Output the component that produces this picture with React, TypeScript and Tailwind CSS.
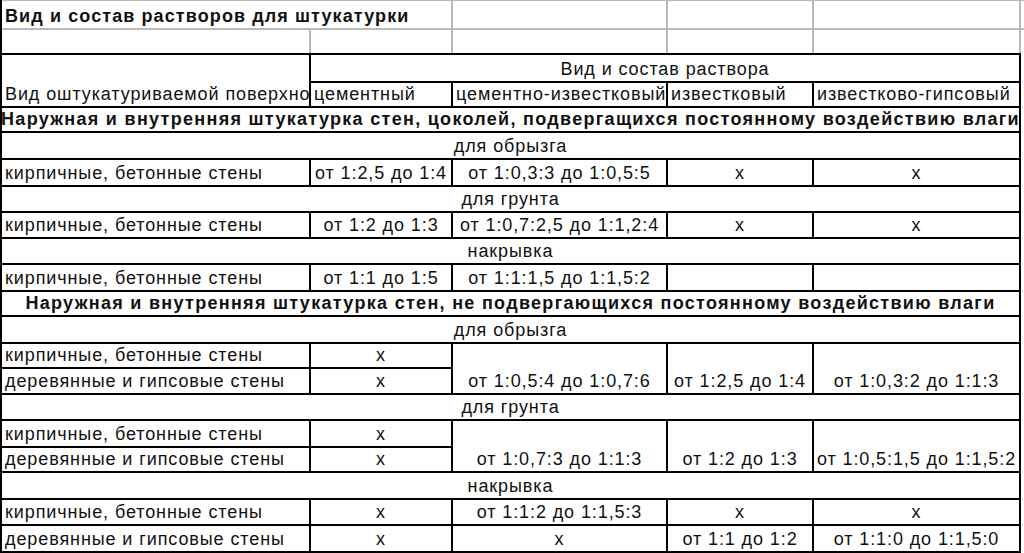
import type { ReactNode } from "react"

type CellProps = {
  children?: ReactNode
  className?: string
}

function Cell({ children, className = "" }: CellProps) {
  return (
    <div
      className={`flex items-end justify-center overflow-hidden whitespace-nowrap bg-white px-[3px] pb-[3px] leading-none ${className}`}
    >
      {children}
    </div>
  )
}

const walls = "кирпичные, бетонные стены"
const woodWalls = "деревянные и гипсовые стены"

export default function App() {
  return (
    <div className="h-[553px] w-[1024px] overflow-hidden bg-white font-['Liberation_Sans',Arial,sans-serif] text-[18px] tracking-[0.9px] text-[#111]">
      {/* empty sheet rows above the table */}
      <div className="grid h-[53px] grid-cols-[307px_140px_213px_144px_205px_1fr] grid-rows-[27px_23px] gap-[2px] border-l-2 border-black bg-[#b9b9b9] pt-px">
        <Cell className="col-span-2 justify-start font-bold tracking-[1.1px]">
          Вид и состав растворов для штукатурки
        </Cell>
        <Cell />
        <Cell />
        <Cell />
        <Cell />
        <Cell />
        <Cell />
        <Cell />
        <Cell />
        <Cell />
        <Cell />
      </div>

      <div className="flex">
        <div className="grid w-[1021px] shrink-0 grid-cols-[307px_140px_213px_144px_205px] grid-rows-[26px_23px_23px_25px_25px_24px_24px_24px_25px_23px_25px_23px_24px_24px_25px_23px_25px_24px_25px] gap-[2px] bg-black p-[2px]">
          <Cell className="row-span-2 justify-start">Вид оштукатуриваемой поверхно</Cell>
          <Cell className="col-span-4">Вид и состав раствора</Cell>
          <Cell className="justify-start">цементный</Cell>
          <Cell className="justify-start">цементно-известковый</Cell>
          <Cell className="justify-start">известковый</Cell>
          <Cell className="justify-start">известково-гипсовый</Cell>

          <Cell className="col-span-5 font-bold tracking-[1.3px]">
            Наружная и внутренняя штукатурка стен, цоколей, подвергащихся постоянному воздействию влаги
          </Cell>
          <Cell className="col-span-5">для обрызга</Cell>
          <Cell className="justify-start">{walls}</Cell>
          <Cell>от 1:2,5 до 1:4</Cell>
          <Cell>от 1:0,3:3 до 1:0,5:5</Cell>
          <Cell>x</Cell>
          <Cell>x</Cell>
          <Cell className="col-span-5">для грунта</Cell>
          <Cell className="justify-start">{walls}</Cell>
          <Cell>от 1:2 до 1:3</Cell>
          <Cell>от 1:0,7:2,5 до 1:1,2:4</Cell>
          <Cell>x</Cell>
          <Cell>x</Cell>
          <Cell className="col-span-5">накрывка</Cell>
          <Cell className="justify-start">{walls}</Cell>
          <Cell>от 1:1 до 1:5</Cell>
          <Cell>от 1:1:1,5 до 1:1,5:2</Cell>
          <Cell />
          <Cell />

          <Cell className="col-span-5 font-bold tracking-[1.3px]">
            Наружная и внутренняя штукатурка стен, не подвергающихся постоянному воздействию влаги
          </Cell>
          <Cell className="col-span-5">для обрызга</Cell>
          <Cell className="justify-start">{walls}</Cell>
          <Cell>x</Cell>
          <Cell className="row-span-2">от 1:0,5:4 до 1:0,7:6</Cell>
          <Cell className="row-span-2">от 1:2,5 до 1:4</Cell>
          <Cell className="row-span-2">от 1:0,3:2 до 1:1:3</Cell>
          <Cell className="justify-start">{woodWalls}</Cell>
          <Cell>x</Cell>
          <Cell className="col-span-5">для грунта</Cell>
          <Cell className="justify-start">{walls}</Cell>
          <Cell>x</Cell>
          <Cell className="row-span-2">от 1:0,7:3 до 1:1:3</Cell>
          <Cell className="row-span-2">от 1:2 до 1:3</Cell>
          <Cell className="row-span-2">от 1:0,5:1,5 до 1:1,5:2</Cell>
          <Cell className="justify-start">{woodWalls}</Cell>
          <Cell>x</Cell>
          <Cell className="col-span-5">накрывка</Cell>
          <Cell className="justify-start">{walls}</Cell>
          <Cell>x</Cell>
          <Cell>от 1:1:2 до 1:1,5:3</Cell>
          <Cell>x</Cell>
          <Cell>x</Cell>
          <Cell className="justify-start">{woodWalls}</Cell>
          <Cell>x</Cell>
          <Cell>x</Cell>
          <Cell>от 1:1 до 1:2</Cell>
          <Cell>от 1:1:0 до 1:1,5:0</Cell>
        </div>
        <div className="flex-1 bg-white" />
      </div>
    </div>
  )
}
